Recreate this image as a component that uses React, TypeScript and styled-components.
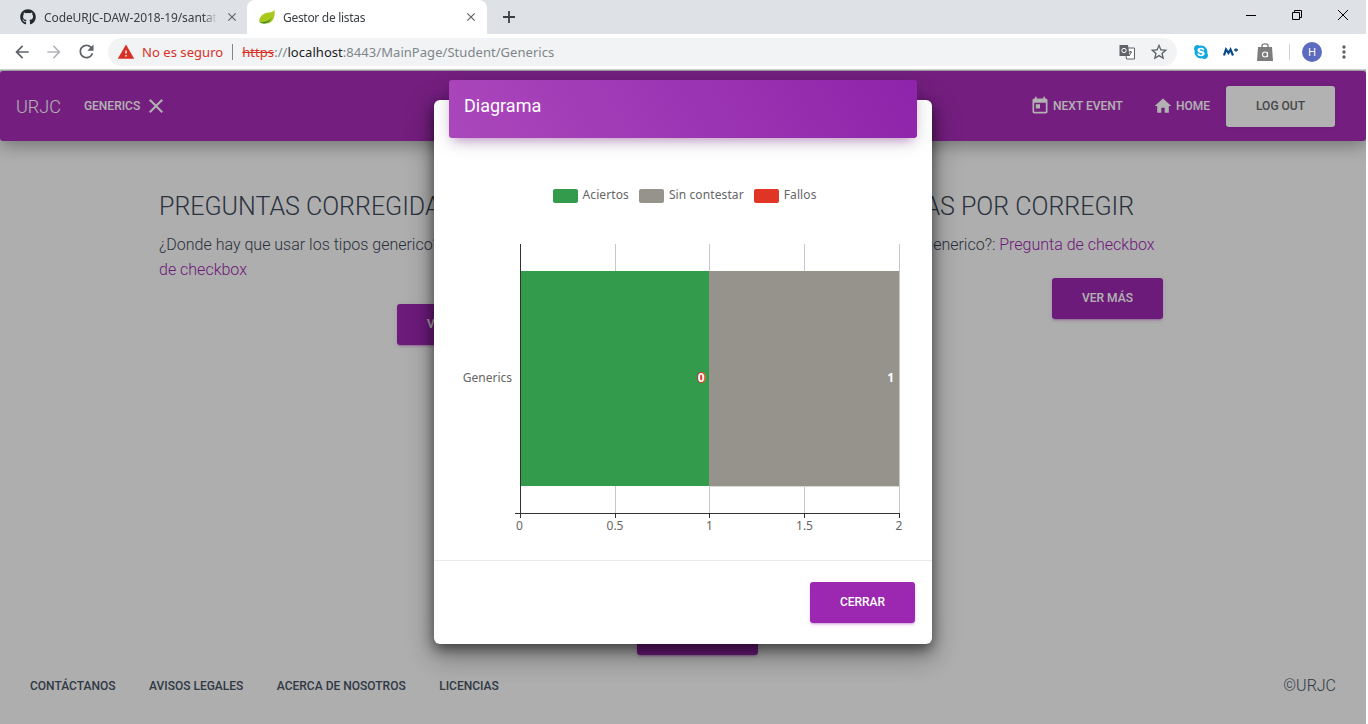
import React from "react";
import styled, { createGlobalStyle } from "styled-components";
import { FaGithub, FaSkype } from "react-icons/fa";
import {
  MdArrowBack,
  MdArrowForward,
  MdClose,
  MdHome,
  MdMoreVert,
  MdRefresh,
  MdStarBorder,
  MdToday,
  MdWarning,
} from "react-icons/md";

/** Constants */
const UI_FONT = `"Noto Sans", "Open Sans", sans-serif`;
const PAGE_FONT = `Roboto, "Liberation Sans", sans-serif`;
const PURPLE = "#9c27b0";

const GlobalStyle = createGlobalStyle`
  html, body {
    margin: 0;
    padding: 0;
    background: #fff;
    overflow: hidden;
  }
  * {
    box-sizing: border-box;
  }
`;

const Screen = styled.div`
  width: 1366px;
  height: 724px;
  display: flex;
  flex-direction: column;
  overflow: hidden;
`;

/* Browser chrome */
const TabStrip = styled.div`
  height: 34px;
  flex: none;
  background: #dee1e6;
  display: flex;
  align-items: stretch;
  padding-left: 7px;
`;

const Tab = styled.div<{ $active?: boolean }>`
  width: 240px;
  display: flex;
  align-items: center;
  gap: 8px;
  padding: 0 ${(p) => (p.$active ? "9px" : "8px")} 0 ${(p) => (p.$active ? "12px" : "13px")};
  border-radius: 8px 8px 0 0;
  background: ${(p) => (p.$active ? "#fff" : "transparent")};
  font: 12px ${UI_FONT};
  color: #3c4043;
  svg {
    flex: none;
  }
`;

const TabTitle = styled.span<{ $tight?: boolean }>`
  flex: 1;
  white-space: nowrap;
  overflow: hidden;
  letter-spacing: ${(p) => (p.$tight ? "-0.3px" : "-0.1px")};
  mask-image: linear-gradient(to right, #000 92%, transparent);
`;

const TabClose = styled(MdClose)`
  color: #5f6368;
`;

const NewTab = styled.div`
  width: 28px;
  margin-left: 8px;
  display: flex;
  align-items: center;
  justify-content: center;
`;

const WindowControls = styled.div`
  margin-left: auto;
  display: flex;
  align-items: flex-start;
`;

const WindowButton = styled.div`
  width: 46px;
  height: 29px;
  display: flex;
  align-items: center;
  justify-content: center;
`;

const Toolbar = styled.div`
  height: 36px;
  flex: none;
  background: #fff;
  display: flex;
  align-items: center;
  padding: 0 8px;
  border-bottom: 1px solid #cfd0d2;
`;

const NavIcon = styled.div<{ $muted?: boolean }>`
  width: 28px;
  height: 28px;
  margin-right: 4px;
  display: flex;
  align-items: center;
  justify-content: center;
  color: ${(p) => (p.$muted ? "#b5b7ba" : "#5f6368")};
`;

const Omnibox = styled.div`
  width: 1069px;
  height: 28px;
  margin-left: 4px;
  border-radius: 14px;
  background: #f1f3f4;
  display: flex;
  align-items: center;
  padding-left: 9px;
  font: 13px ${UI_FONT};
  letter-spacing: 0.05px;
  white-space: nowrap;
`;

const InsecureLabel = styled.span`
  margin-left: 7px;
  color: #d93025;
`;

const OmniDivider = styled.span`
  width: 1px;
  height: 16px;
  margin: 0 9px 0 9px;
  background: #80868b;
`;

const UrlPart = styled.span<{ $tone: "dark" | "grey" | "struck" }>`
  color: ${(p) =>
    p.$tone === "dark" ? "#202124" : p.$tone === "grey" ? "#80868b" : "#d93025"};
  text-decoration: ${(p) => (p.$tone === "struck" ? "line-through" : "none")};
`;

const OmniIcons = styled.div`
  margin-left: auto;
  display: flex;
  align-items: center;
  gap: 14px;
  padding-right: 8px;
  color: #5f6368;
`;

const Extensions = styled.div`
  display: flex;
  align-items: center;
  margin-left: 16px;
  gap: 16px;
`;

const ExtDivider = styled.span`
  width: 1px;
  height: 16px;
  background: #d0d2d4;
`;

const Avatar = styled.div`
  width: 20px;
  height: 20px;
  margin-left: -4px;
  border-radius: 50%;
  background: #5c6bc0;
  color: #fff;
  font: 11px ${UI_FONT};
  display: flex;
  align-items: center;
  justify-content: center;
`;

const MenuIcon = styled(MdMoreVert)`
  margin-left: -4px;
  color: #5f6368;
`;

/* The page behind the dialog */
const Viewport = styled.div`
  position: relative;
  flex: 1;
  background: #f9f9f9;
  font-family: ${PAGE_FONT};
  overflow: hidden;
`;

const Navbar = styled.nav`
  height: 70px;
  margin-top: 1px;
  background: #a62db6;
  border-radius: 3px;
  box-shadow: 0 4px 18px rgba(0, 0, 0, 0.35);
  display: flex;
  align-items: center;
  padding: 0 31px 0 16px;
  color: #fff;
`;

const Brand = styled.span`
  font-size: 18px;
  font-weight: 300;
  margin-right: 23px;
`;

const NavItem = styled.span<{ $push?: boolean }>`
  display: flex;
  align-items: center;
  gap: ${(p) => (p.$push ? "3px" : "4px")};
  font-size: 12px;
  font-weight: 500;
  margin-left: ${(p) => (p.$push ? "auto" : "0")};
  margin-right: ${(p) => (p.$push ? "30px" : "0")};
`;

const HomeItem = styled(NavItem)`
  gap: 3px;
  margin-right: 16px;
`;

const RaisedButton = styled.button<{ $bg: string; $fg: string; $w: number }>`
  width: ${(p) => p.$w}px;
  height: 41px;
  flex: none;
  border: 0;
  padding: 0 0 1px;
  border-radius: 3px;
  background: ${(p) => p.$bg};
  color: ${(p) => p.$fg};
  font: 500 12px ${PAGE_FONT};
  box-shadow: 0 2px 2px rgba(156, 39, 176, 0.14),
    0 3px 1px -2px rgba(156, 39, 176, 0.2), 0 1px 5px rgba(156, 39, 176, 0.12);
`;

const Columns = styled.div`
  display: grid;
  grid-template-columns: 516px 516px;
  margin: 49px 0 0 159px;
`;

const Column = styled.section`
  color: #3c4858;
`;

const ColumnTitle = styled.h2<{ $indent?: number }>`
  margin: 0;
  padding-left: ${(p) => p.$indent || 0}px;
  font-size: 25px;
  font-weight: 300;
  line-height: 34px;
  white-space: nowrap;
`;

const Question = styled.p<{ $indent?: number; $narrow?: boolean }>`
  margin: 8px 0 0;
  padding-left: ${(p) => p.$indent || 0}px;
  max-width: ${(p) => (p.$narrow ? "365px" : "none")};
  font-size: 16px;
  font-weight: 300;
  line-height: 25px;
`;

const QuestionLink = styled.a`
  color: ${PURPLE};
`;

const ColumnAction = styled.div<{ $indent: number; $gap: number }>`
  margin: ${(p) => p.$gap}px 0 0 ${(p) => p.$indent}px;
`;

const HiddenAction = styled.div`
  margin: 269px 0 0 637px;
`;

const Footer = styled.footer`
  position: absolute;
  left: 30px;
  right: 30px;
  bottom: 29px;
  display: flex;
  align-items: center;
  gap: 33.5px;
  color: #465264;
  font-size: 12px;
  font-weight: 500;
`;

const Copyright = styled.span`
  margin-left: auto;
  font-size: 16px;
  font-weight: 300;
`;

const Backdrop = styled.div`
  position: absolute;
  inset: 0;
  background: rgba(0, 0, 0, 0.3);
`;

/* Dialog */
const Dialog = styled.div`
  position: absolute;
  left: 434px;
  top: 30px;
  width: 498px;
  height: 544px;
  background: #fff;
  border-radius: 6px;
  box-shadow: 0 16px 24px 2px rgba(0, 0, 0, 0.14), 0 6px 30px 5px rgba(0, 0, 0, 0.12),
    0 5px 14px rgba(0, 0, 0, 0.55);
  display: flex;
  flex-direction: column;
`;

const DialogHeader = styled.header`
  height: 58px;
  flex: none;
  margin: -20px 15px 0;
  padding: 0 0 8px 15px;
  display: flex;
  align-items: center;
  border-radius: 3px;
  background: linear-gradient(60deg, #ab47bc, #8e24aa);
  box-shadow: 0 4px 20px 0 rgba(0, 0, 0, 0.14), 0 7px 10px -5px rgba(156, 39, 176, 0.4);
  color: #fff;
  font-size: 18px;
`;

const Legend = styled.div`
  margin-top: 49px;
  display: flex;
  justify-content: center;
  padding-left: 3px;
  gap: 10px;
  font: 12px ${UI_FONT};
  letter-spacing: 0.1px;
  color: #666;
`;

const LegendItem = styled.span`
  display: flex;
  align-items: center;
  gap: 5px;
  height: 14px;
`;

const Swatch = styled.span<{ $color: string }>`
  width: 25px;
  height: 14px;
  margin-top: 4px;
  border-radius: 2px;
  background: ${(p) => p.$color};
`;

const ChartFrame = styled.svg`
  display: block;
  flex: none;
  margin-top: 43px;
  font: 12px ${UI_FONT};
`;

const DialogFooter = styled.div`
  margin-top: auto;
  height: 84px;
  border-top: 1px solid #e9ecef;
  display: flex;
  justify-content: flex-end;
  align-items: flex-start;
  padding: 21px 17px 0 0;
`;

const MovistarGlyph = styled.svg`
  margin: 0 2px 0 -2px;
`;

/* Icons that no package has */
const SpringLeaf: React.FC = () => (
  <svg width="16" height="16" viewBox="0 0 16 16">
    <path d="M0 12.500C.5 7 5 3.500 10 3.500c2.500 0 4.500-1 5.500-2.500.8 5-.5 13-8 13.500C4.500 14.800 1.500 14.500 0 12.500z" fill="#a9c91e" />
    <path d="M1 13C5 13.500 10 12.500 13 8.500 11.500 12.500 8 14.800 4.500 14.500 3 14.300 1.800 13.800 1 13z" fill="#4c8a2a" />
  </svg>
);

const TranslateIcon: React.FC = () => (
  <svg width="16" height="16" viewBox="0 0 16 16">
    <path d="M6 4h9.500v11H7.500z" fill="#fff" stroke="#5f6368" />
    <path d="M.5 1h8.500l1.500 11H.5z" fill="#5f6368" />
    <circle cx="5" cy="6.500" r="2.200" fill="none" stroke="#fff" />
    <path d="M10 8h3M11.500 7v1M12.500 8l-2.500 4" stroke="#5f6368" fill="none" />
  </svg>
);

const MovistarIcon: React.FC = () => (
  <MovistarGlyph width="16" height="12" viewBox="0 0 16 12">
    <path d="M1 9.500L3 3.500 5.500 7 7.500 3.500 10 9.500" fill="none" stroke="#0b4a8a" strokeWidth="2.200" />
    <path d="M11 4h4M13 2.200v3.600" stroke="#0b4a8a" strokeWidth="1.300" />
  </MovistarGlyph>
);

const BagIcon: React.FC = () => (
  <svg width="16" height="18" viewBox="0 0 16 18">
    <path d="M5 5V2.500C5 .3 11 .3 11 2.500V5" fill="none" stroke="#777" strokeWidth="1.300" />
    <path d="M1 4h14l1 14H0z" fill="#7d7d7d" />
    <circle cx="8" cy="11.500" r="2.500" fill="none" stroke="#fff" strokeWidth="1.100" />
    <path d="M10.500 9v5" stroke="#fff" strokeWidth="1.100" />
  </svg>
);

const MinimizeGlyph: React.FC = () => (
  <svg width="10" height="10" viewBox="0 0 10 10">
    <path d="M0 5.500h10" stroke="#000" />
  </svg>
);

const RestoreGlyph: React.FC = () => (
  <svg width="10" height="10" viewBox="0 0 10 10">
    <path d="M.5 2.500h7v7h-7zM2.500 2.500V.5h7v7h-2" fill="none" stroke="#000" />
  </svg>
);

const CloseGlyph: React.FC = () => (
  <svg width="10" height="10" viewBox="0 0 10 10">
    <path d="M0 0l10 10M10 0L0 10" stroke="#000" />
  </svg>
);

/* Plot coordinates are relative to the dialog's left edge */
const GREEN = "#339c4c";
const GREY = "#96938c";
const TICKS = [
  { x: 86.5, text: 85.5, label: "0" },
  { x: 181.5, text: 181, label: "0.5" },
  { x: 275.5, text: 275.5, label: "1" },
  { x: 370.5, text: 370.5, label: "1.5" },
  { x: 465.5, text: 465, label: "2" },
];

const BarChart: React.FC = () => (
  <ChartFrame width="498" height="300" viewBox="0 0 498 300">
    {TICKS.slice(1).map((t) => (
      <path key={t.x} d={`M${t.x} 0V274`} stroke="#c8c8c8" />
    ))}
    <rect x="86" y="27" width="189" height="215" fill={GREEN} />
    <rect x="275" y="27" width="190" height="215" fill={GREY} />
    <path d="M275 242.500H465" stroke="#d8d6d0" />
    <path d="M86.500 0V274M81 269.500H466" stroke="#333" fill="none" />
    {TICKS.map((t) => (
      <g key={t.label}>
        <path d={`M${t.x} 269V274`} stroke="#333" />
        <text x={t.text} y="286" textAnchor="middle" fill="#666">
          {t.label}
        </text>
      </g>
    ))}
    <text x="78" y="138" textAnchor="end" fill="#666">
      Generics
    </text>
    <text
      x="270.500"
      y="138"
      textAnchor="end"
      fill="#fff"
      stroke="#e03524"
      strokeWidth="2"
      paintOrder="stroke"
      fontWeight="700"
    >
      0
    </text>
    <text x="460" y="138" textAnchor="end" fill="#fff" fontWeight="700">
      1
    </text>
  </ChartFrame>
);

const App: React.FC = () => (
  <Screen>
    <GlobalStyle />
    <TabStrip>
      <Tab>
        <FaGithub size={16} color="#24292e" />
        <TabTitle>CodeURJC-DAW-2018-19/santateresa</TabTitle>
        <TabClose size={14} />
      </Tab>
      <Tab $active>
        <SpringLeaf />
        <TabTitle $tight>Gestor de listas</TabTitle>
        <TabClose size={14} />
      </Tab>
      <NewTab>
        <svg width="14" height="14" viewBox="0 0 14 14">
          <path d="M7 1v12M1 7h12" stroke="#3c4043" strokeWidth="1.800" />
        </svg>
      </NewTab>
      <WindowControls>
        <WindowButton>
          <MinimizeGlyph />
        </WindowButton>
        <WindowButton>
          <RestoreGlyph />
        </WindowButton>
        <WindowButton>
          <CloseGlyph />
        </WindowButton>
      </WindowControls>
    </TabStrip>

    <Toolbar>
      <NavIcon>
        <MdArrowBack size={20} />
      </NavIcon>
      <NavIcon $muted>
        <MdArrowForward size={20} />
      </NavIcon>
      <NavIcon>
        <MdRefresh size={21} />
      </NavIcon>
      <Omnibox>
        <MdWarning size={18} color="#d93025" />
        <InsecureLabel>No es seguro</InsecureLabel>
        <OmniDivider />
        <UrlPart $tone="struck">https</UrlPart>
        <UrlPart $tone="grey">://</UrlPart>
        <UrlPart $tone="dark">localhost</UrlPart>
        <UrlPart $tone="grey">:8443/MainPage/Student/Generics</UrlPart>
        <OmniIcons>
          <TranslateIcon />
          <MdStarBorder size={20} />
        </OmniIcons>
      </Omnibox>
      <Extensions>
        <FaSkype size={16} color="#10a7e0" />
        <MovistarIcon />
        <BagIcon />
        <ExtDivider />
        <Avatar>H</Avatar>
        <MenuIcon size={20} />
      </Extensions>
    </Toolbar>

    <Viewport>
      <Navbar>
        <Brand>URJC</Brand>
        <NavItem>
          GENERICS
          <MdClose size={24} />
        </NavItem>
        <NavItem $push>
          <MdToday size={20} />
          NEXT EVENT
        </NavItem>
        <HomeItem>
          <MdHome size={20} />
          HOME
        </HomeItem>
        <RaisedButton $bg="#fff" $fg="#666" $w={109}>
          LOG OUT
        </RaisedButton>
      </Navbar>

      <Columns>
        <Column>
          <ColumnTitle>PREGUNTAS CORREGIDAS</ColumnTitle>
          <Question $narrow>
            ¿Donde hay que usar los tipos generico?: <QuestionLink>Pregunta de checkbox</QuestionLink>
          </Question>
          <ColumnAction $indent={238} $gap={22}>
            <RaisedButton $bg={PURPLE} $fg="#fff" $w={111}>
              VER MÁS
            </RaisedButton>
          </ColumnAction>
        </Column>
        <Column>
          <ColumnTitle $indent={139}>PREGUNTAS POR CORREGIR</ColumnTitle>
          <Question $indent={36}>
            ¿Donde hay que usar los tipos generico?: <QuestionLink>Pregunta de checkbox</QuestionLink>
          </Question>
          <ColumnAction $indent={377} $gap={21}>
            <RaisedButton $bg={PURPLE} $fg="#fff" $w={111}>
              VER MÁS
            </RaisedButton>
          </ColumnAction>
        </Column>
      </Columns>

      <HiddenAction>
        <RaisedButton $bg={PURPLE} $fg="#fff" $w={121}>
          VER MÁS
        </RaisedButton>
      </HiddenAction>

      <Footer>
        <span>CONTÁCTANOS</span>
        <span>AVISOS LEGALES</span>
        <span>ACERCA DE NOSOTROS</span>
        <span>LICENCIAS</span>
        <Copyright>©URJC</Copyright>
      </Footer>

      <Backdrop />

      <Dialog role="dialog">
        <DialogHeader>Diagrama</DialogHeader>
        <Legend>
          <LegendItem>
            <Swatch $color={GREEN} />
            Aciertos
          </LegendItem>
          <LegendItem>
            <Swatch $color={GREY} />
            Sin contestar
          </LegendItem>
          <LegendItem>
            <Swatch $color="#e03524" />
            Fallos
          </LegendItem>
        </Legend>
        <BarChart />
        <DialogFooter>
          <RaisedButton $bg={PURPLE} $fg="#fff" $w={105}>
            CERRAR
          </RaisedButton>
        </DialogFooter>
      </Dialog>
    </Viewport>
  </Screen>
);

export default App;
